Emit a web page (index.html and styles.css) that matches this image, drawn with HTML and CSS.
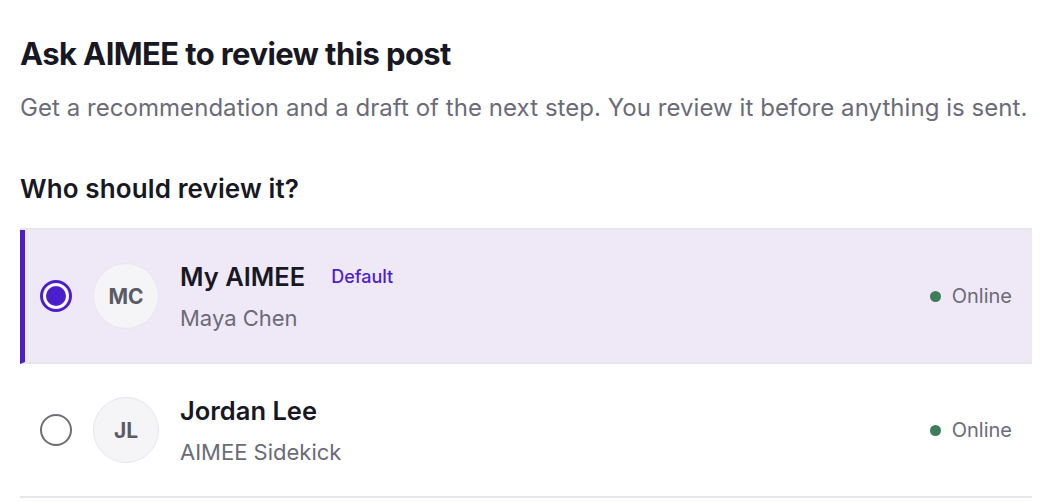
FILE: index.html
```html
<!DOCTYPE html>
<html lang="en">
<head>
<meta charset="utf-8">
<title>Ask AIMEE</title>
<link rel="stylesheet" href="styles.css">
</head>
<body>
<main class="panel">
  <h1 class="title">Ask AIMEE to review this post</h1>
  <p class="subtitle">Get a recommendation and a draft of the next step. You review it before anything is sent.</p>
  <h2 class="section">Who should review it?</h2>
  <div class="options">
    <label class="option selected">
      <span class="radio"><span class="dot"></span></span>
      <span class="avatar">MC</span>
      <span class="info">
        <span class="name-line"><span class="name">My AIMEE</span><span class="badge">Default</span></span>
        <span class="sub">Maya Chen</span>
      </span>
      <span class="status"><span class="status-dot"></span>Online</span>
    </label>
    <label class="option">
      <span class="radio"></span>
      <span class="avatar">JL</span>
      <span class="info">
        <span class="name-line"><span class="name">Jordan Lee</span></span>
        <span class="sub">AIMEE Sidekick</span>
      </span>
      <span class="status"><span class="status-dot"></span>Online</span>
    </label>
  </div>
</main>
</body>
</html>
```
FILE: styles.css
```css
* { box-sizing: border-box; }
html, body { margin: 0; background: #ffffff; }
body {
  font-family: Inter, "Noto Sans", "Liberation Sans", sans-serif;
  color: #1a1a24;
}
.panel {
  width: 1032px;
  padding: 34px 0 0 20px;
}
.title {
  margin: 0;
  font-size: 31px;
  line-height: 40px;
  font-weight: 700;
  letter-spacing: -0.6px;
  color: #181824;
}
.subtitle {
  margin: 18px 0 0;
  font-size: 24px;
  line-height: 32px;
  letter-spacing: 0.05px;
  color: #6b6b78;
}
.section {
  margin: 49px 0 0;
  font-size: 26px;
  line-height: 32px;
  font-weight: 600;
  letter-spacing: 0.12px;
  color: #181824;
}
.options {
  margin-top: 23px;
  border-top: 2px solid #e6e6ec;
}
.option {
  display: flex;
  align-items: center;
  height: 134px;
  padding: 0 20px 0 20px;
  border-bottom: 2px solid #e6e6ec;
}
.option.selected {
  background: #efe9f7;
  border-left: 5px solid #4c1fcc;
  padding-left: 15px;
}
.radio {
  width: 32px;
  height: 32px;
  border-radius: 50%;
  border: 2px solid #6e6e74;
  display: flex;
  align-items: center;
  justify-content: center;
  flex: none;
}
.selected .radio {
  border: 3px solid #4c1fcc;
  background: #ffffff;
}
.dot {
  width: 20px;
  height: 20px;
  border-radius: 50%;
  background: #4c1fcc;
}
.avatar {
  margin-left: 21px;
  width: 66px;
  height: 66px;
  border-radius: 50%;
  background: #f5f5f8;
  border: 1px solid #e6e6ec;
  display: flex;
  align-items: center;
  justify-content: center;
  font-size: 21px;
  font-weight: 700;
  color: #5b5b68;
  flex: none;
}
.info {
  margin-left: 21px;
  display: flex;
  flex-direction: column;
  gap: 10px;
  flex: 1;
}
.name-line {
  display: flex;
  align-items: center;
  gap: 26px;
}
.name {
  font-size: 25.5px;
  line-height: 34px;
  font-weight: 600;
  color: #181824;
}
.badge {
  font-size: 18px;
  line-height: 24px;
  font-weight: 500;
  color: #4c1fcc;
}
.sub {
  font-size: 22px;
  line-height: 28px;
  color: #6b6b78;
}
.status {
  display: flex;
  align-items: center;
  gap: 11px;
  font-size: 20px;
  color: #6b6b78;
}
.status-dot {
  width: 11px;
  height: 11px;
  border-radius: 50%;
  background: #3f7d5a;
}
```
